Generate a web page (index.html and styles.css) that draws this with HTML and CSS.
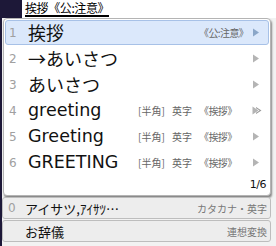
FILE: index.html
```html
<!DOCTYPE html>
<html lang="ja">
<head>
    <meta charset="UTF-8">
    <meta name="viewport" content="width=device-width, initial-scale=1.0">
    <title>候補ウィンドウ</title>
    <link rel="stylesheet" href="styles.css">
</head>
<body>
<div class="frame">
    <div class="edge"></div>
    <div class="main">
        <div class="preedit">
            <div class="mask"></div>
            <div class="preedit-text"><span class="uline">挨拶《公:注意》</span></div>
        </div>

        <div class="cands">
            <div class="row selected">
                <span class="num">1</span>
                <span class="word">挨拶</span>
                <span class="a"></span>
                <span class="b"></span>
                <span class="c">《公:注意》</span>
                <span class="arrow"><svg width="8" height="9" viewBox="0 0 8 9"><path d="M1 0.5 L7 4.5 L1 8.5 Z" fill="#8aa6c8"/></svg></span>
            </div>
            <div class="row">
                <span class="num">2</span>
                <span class="word">→あいさつ</span>
                <span class="a"></span>
                <span class="b"></span>
                <span class="c"></span>
                <span class="arrow"><svg width="8" height="9" viewBox="0 0 8 9"><path d="M1 0.5 L7 4.5 L1 8.5 Z" fill="#b4b4b4"/></svg></span>
            </div>
            <div class="row">
                <span class="num">3</span>
                <span class="word">あいさつ</span>
                <span class="a"></span>
                <span class="b"></span>
                <span class="c"></span>
                <span class="arrow"><svg width="8" height="9" viewBox="0 0 8 9"><path d="M1 0.5 L7 4.5 L1 8.5 Z" fill="#b4b4b4"/></svg></span>
            </div>
            <div class="row">
                <span class="num">4</span>
                <span class="word latin">greeting</span>
                <span class="a">[半角]</span>
                <span class="b">英字</span>
                <span class="c">《挨拶》</span>
                <span class="arrow"><svg width="10" height="9" viewBox="0 0 10 9"><path d="M0.5 0.5 L6.5 4.5 L0.5 8.5 Z" fill="#b4b4b4"/><path d="M4 1 L9.5 4.5 L4 8 L4 6.8 L7.6 4.5 L4 2.2 Z" fill="#9a9a9a"/></svg></span>
            </div>
            <div class="row">
                <span class="num">5</span>
                <span class="word latin">Greeting</span>
                <span class="a">[半角]</span>
                <span class="b">英字</span>
                <span class="c">《挨拶》</span>
                <span class="arrow"><svg width="8" height="9" viewBox="0 0 8 9"><path d="M1 0.5 L7 4.5 L1 8.5 Z" fill="#b4b4b4"/></svg></span>
            </div>
            <div class="row">
                <span class="num">6</span>
                <span class="word latin">GREETING</span>
                <span class="a">[半角]</span>
                <span class="b">英字</span>
                <span class="c">《挨拶》</span>
                <span class="arrow"><svg width="8" height="9" viewBox="0 0 8 9"><path d="M1 0.5 L7 4.5 L1 8.5 Z" fill="#b4b4b4"/></svg></span>
            </div>
            <div class="count">1/6</div>
        </div>

        <div class="extra">
            <span class="num">0</span>
            <span class="extra-word">アイサツ,ｱｲｻﾂ…</span>
            <span class="extra-note">カタカナ・英字</span>
        </div>
        <div class="extra">
            <span class="num"></span>
            <span class="extra-word">お辞儀</span>
            <span class="extra-note">連想変換</span>
        </div>
    </div>
</div>
</body>
</html>
```

FILE: styles.css
```css
body {
    margin: 0;
    background: #f2f2f2;
    font-family: "Noto Sans CJK JP", sans-serif;
    width: 276px;
    height: 246px;
    overflow: hidden;
}
.frame {
    display: flex;
    height: 246px;
}
.edge {
    width: 2px;
    background: #1d1838;
}
.main {
    flex: 1;
    display: flex;
    flex-direction: column;
}
.preedit {
    display: flex;
    height: 18px;
    background: #fff;
}
.mask {
    width: 20px;
    background: #1d1838;
}
.preedit-text {
    padding-left: 3px;
    font-size: 12px;
    line-height: 15px;
    color: #000;
}
.uline {
    border-bottom: 2px solid #000;
    display: inline-block;
    line-height: 14px;
    letter-spacing: -0.4px;
}

.cands {
    background: #fff;
    border: 1px solid #b4b4b4;
    border-radius: 4px;
    margin: 0 5px 0 1px;
    padding: 1px 0 0;
    box-shadow: 1px 2px 2px rgba(0, 0, 0, 0.45);
}
.row {
    display: grid;
    grid-template-columns: 22px 110px 34px 27px 1fr 16px;
    align-items: center;
    height: 23px;
    margin: 0 1px 1px;
    border: 1px solid transparent;
    border-radius: 3px;
}
.row.selected {
    background: #dbe8fb;
    border-color: #a7c1e7;
}
.num {
    padding-left: 3px;
    font-family: "DejaVu Sans", sans-serif;
    font-size: 12px;
    color: #a0a0a0;
}
.word {
    font-size: 18px;
    line-height: 23px;
    color: #111;
    white-space: nowrap;
}
.word.latin {
    font-family: "DejaVu Sans", sans-serif;
    font-size: 17.5px;
}
.a, .b, .c {
    font-size: 10px;
    color: #666;
    white-space: nowrap;
}
.c {
    letter-spacing: -0.6px;
}
.arrow {
    display: flex;
    align-items: center;
}
.count {
    text-align: right;
    font-family: "DejaVu Sans", sans-serif;
    font-size: 11px;
    line-height: 13px;
    letter-spacing: -0.5px;
    color: #111;
    padding: 2px 4px 4px 0;
}

.extra {
    display: flex;
    align-items: center;
    height: 20px;
    margin: 1px 5px 0 0;
    background: #ededed;
    border: 1px solid #bdbdbd;
    border-radius: 3px;
}
.extra .num {
    width: 22px;
    padding-left: 5px;
    box-sizing: border-box;
}
.extra-word {
    flex: 1;
    font-size: 13px;
    color: #111;
}
.extra-note {
    font-size: 10px;
    color: #777;
    padding-right: 3px;
}
```
